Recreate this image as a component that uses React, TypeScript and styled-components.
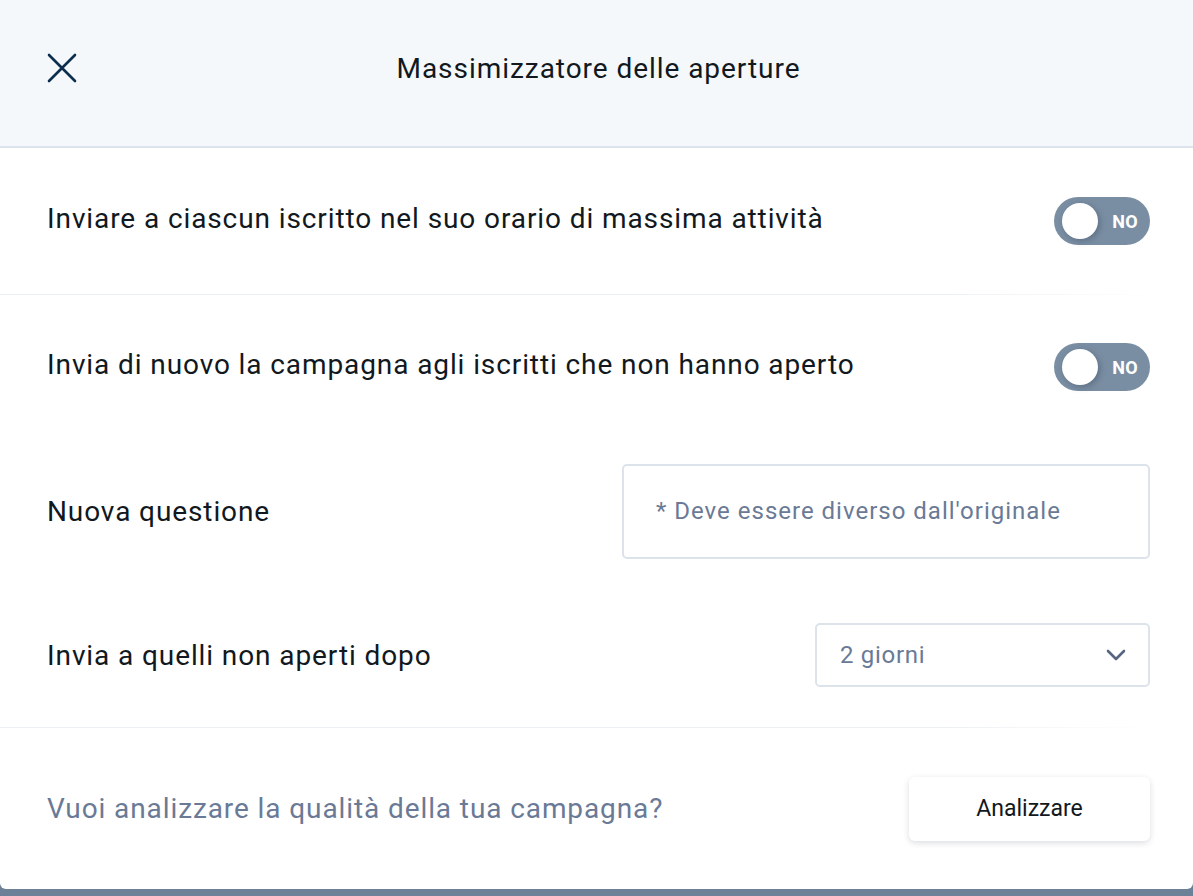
import React from "react";
import styled, { createGlobalStyle } from "styled-components";

const GlobalStyle = createGlobalStyle`
  html, body {
    margin: 0;
    padding: 0;
    background: #6c8198;
  }
  body {
    font-family: Roboto, "Noto Sans", "Liberation Sans", sans-serif;
    color: #111820;
  }
`;

const Modal = styled.div`
  width: 1193px;
  height: 889px;
  background: #fff;
  border-radius: 0 0 6px 6px;
  display: flex;
  flex-direction: column;
  overflow: hidden;
`;

const Header = styled.header`
  height: 148px;
  box-sizing: border-box;
  flex-shrink: 0;
  background: #f5f8fa;
  border-bottom: 2px solid #dde3ea;
  display: grid;
  grid-template-columns: 1fr auto 1fr;
  align-items: center;
  padding: 0 47px 10px;
`;

const CloseButton = styled.button`
  justify-self: start;
  width: 30px;
  height: 30px;
  padding: 0;
  border: none;
  background: none;
  display: flex;
  align-items: center;
  justify-content: center;
  cursor: pointer;
`;

const Title = styled.h1`
  margin: 0;
  font-size: 28px;
  font-weight: 400;
  color: #111820;
  letter-spacing: 0.95px;
  transform: translateX(2px);
`;

const Row = styled.div<{ $height: number }>`
  height: ${({ $height }) => $height}px;
  flex-shrink: 0;
  display: flex;
  align-items: center;
  justify-content: space-between;
  padding: 0 43px 0 47px;
`;

const Divider = styled.div`
  height: 1px;
  flex-shrink: 0;
  background: linear-gradient(to right, #eceff3 0%, #eef1f4 80%, rgba(238, 241, 244, 0) 97%);
`;

const Label = styled.span<{ $raised?: boolean }>`
  font-size: 28px;
  color: #111820;
  letter-spacing: 0.9px;
  margin-bottom: ${({ $raised }) => ($raised ? 5 : 0)}px;
`;

const Toggle = styled.div`
  position: relative;
  width: 96px;
  height: 48px;
  border-radius: 24px;
  background: #7a8ea3;
  display: flex;
  align-items: center;
  justify-content: flex-end;
  padding-right: 12px;
  box-sizing: border-box;
`;

const Knob = styled.span`
  position: absolute;
  left: 8px;
  top: 6px;
  width: 36px;
  height: 36px;
  border-radius: 50%;
  background: #fff;
  box-shadow: 2px 2px 6px rgba(40, 55, 75, 0.35);
`;

const ToggleText = styled.span`
  font-size: 18px;
  font-weight: 700;
  color: #fff;
  letter-spacing: 0.3px;
`;

const TextInput = styled.input`
  width: 528px;
  height: 95px;
  box-sizing: border-box;
  border: 2px solid #dde3ea;
  border-radius: 5px;
  padding: 0 32px;
  font-family: inherit;
  font-size: 24px;
  color: #111820;
  outline: none;
  &::placeholder {
    color: #6a7a96;
    letter-spacing: 1px;
  }
`;

const Select = styled.div`
  width: 335px;
  height: 64px;
  box-sizing: border-box;
  border: 2px solid #dde3ea;
  border-radius: 5px;
  padding: 0 22px 0 23px;
  display: flex;
  align-items: center;
  justify-content: space-between;
  font-size: 24px;
  letter-spacing: 0.7px;
  color: #6a7a96;
`;

const Footer = styled.footer`
  flex: 1;
  display: flex;
  align-items: center;
  justify-content: space-between;
  padding: 0 43px 0 47px;
`;

const Hint = styled.span`
  font-size: 28px;
  color: #6a7a96;
  letter-spacing: 0.9px;
`;

const Button = styled.button`
  width: 241px;
  height: 64px;
  border: none;
  border-radius: 6px;
  background: #fff;
  box-shadow: 0 2px 6px rgba(30, 45, 70, 0.16);
  font-family: inherit;
  font-size: 23px;
  color: #111820;
  cursor: pointer;
`;

const Switch = () => (
  <Toggle>
    <Knob />
    <ToggleText>NO</ToggleText>
  </Toggle>
);

const App = () => {
  return (
    <>
      <GlobalStyle />
      <Modal>
        <Header>
          <CloseButton aria-label="Chiudi">
            <svg width="30" height="30" viewBox="0 0 30 30" fill="none">
              <path d="M2 2 L28 28 M28 2 L2 28" stroke="#0c2d4e" strokeWidth="2.6" strokeLinecap="round" />
            </svg>
          </CloseButton>
          <Title>Massimizzatore delle aperture</Title>
          <span />
        </Header>

        <Row $height={146}>
          <Label $raised>Inviare a ciascun iscritto nel suo orario di massima attività</Label>
          <Switch />
        </Row>
        <Divider />

        <Row $height={144}>
          <Label $raised>Invia di nuovo la campagna agli iscritti che non hanno aperto</Label>
          <Switch />
        </Row>
        <Row $height={144}>
          <Label>Nuova questione</Label>
          <TextInput placeholder="* Deve essere diverso dall'originale" />
        </Row>
        <Row $height={144}>
          <Label>Invia a quelli non aperti dopo</Label>
          <Select>
            <span>2 giorni</span>
            <svg width="20" height="12" viewBox="0 0 20 12" fill="none">
              <path d="M2 2 L10 10 L18 2" stroke="#566680" strokeWidth="2.6" strokeLinecap="round" strokeLinejoin="round" />
            </svg>
          </Select>
        </Row>
        <Divider />

        <Footer>
          <Hint>Vuoi analizzare la qualità della tua campagna?</Hint>
          <Button>Analizzare</Button>
        </Footer>
      </Modal>
    </>
  );
};

export default App;
